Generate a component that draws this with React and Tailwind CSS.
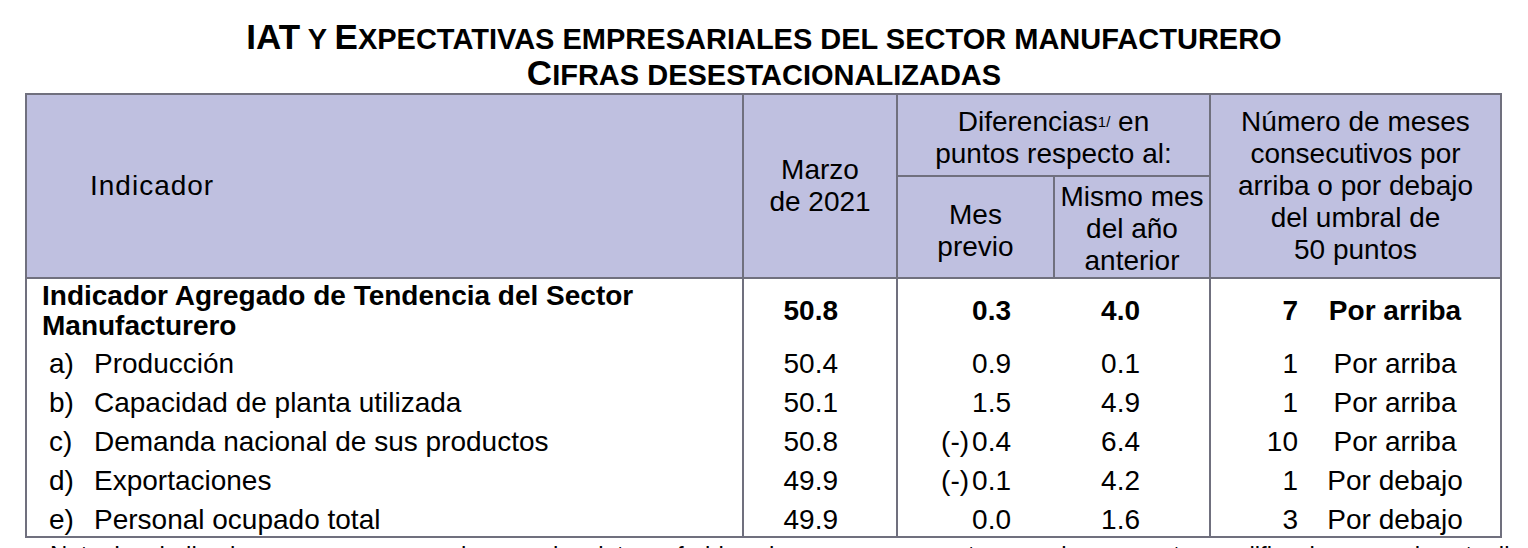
const ROWS = [
  { k: 'a)', name: 'Producción', mar: '50.4', prev: '0.9', anio: '0.1', n: '1', pos: 'Por arriba' },
  { k: 'b)', name: 'Capacidad de planta utilizada', mar: '50.1', prev: '1.5', anio: '4.9', n: '1', pos: 'Por arriba' },
  { k: 'c)', name: 'Demanda nacional de sus productos', mar: '50.8', prev: '0.4', neg: true, anio: '6.4', n: '10', pos: 'Por arriba' },
  { k: 'd)', name: 'Exportaciones', mar: '49.9', prev: '0.1', neg: true, anio: '4.2', n: '1', pos: 'Por debajo' },
  { k: 'e)', name: 'Personal ocupado total', mar: '49.9', prev: '0.0', anio: '1.6', n: '3', pos: 'Por debajo' },
];

function Prev({ v, neg }) {
  return (
    <>
      {neg && <span className="mr-[3px]">(-)</span>}
      {v}
    </>
  );
}

// small caps done by hand: first letters big, the rest uppercase at a smaller size
function Caps({ big, small }) {
  return (
    <>
      <span className="text-[35px] leading-none">{big}</span>
      <span className="text-[29px] leading-none">{small}</span>
    </>
  );
}

export default function App() {
  return (
    <div className="w-[1528px] h-[548px] overflow-hidden bg-white text-black font-['Liberation_Sans',Arial,sans-serif]">
      {/* Title */}
      <div className="pt-[19px] text-center font-bold">
        <p className="h-[36px] leading-[36px] whitespace-nowrap">
          <Caps big="IAT" small=" Y " />
          <Caps big="E" small="XPECTATIVAS EMPRESARIALES DEL SECTOR MANUFACTURERO" />
        </p>
        <p className="h-[36px] leading-[36px] whitespace-nowrap">
          <Caps big="C" small="IFRAS DESESTACIONALIZADAS" />
        </p>
      </div>

      <table className="ml-[25px] mt-[2px] w-[1475px] table-fixed border-collapse border-2 border-[#70707e] text-[28px]">
        <colgroup>
          <col className="w-[717px]" />
          <col className="w-[154px]" />
          <col className="w-[157px]" />
          <col className="w-[156px]" />
          <col className="w-[291px]" />
        </colgroup>
        <thead className="bg-[#bfc0e0] leading-[32px]">
          <tr className="h-[82px]">
            <th rowSpan={2} className="border-2 border-[#70707e] pl-[63px] text-left font-normal tracking-[1px]">
              Indicador
            </th>
            <th rowSpan={2} className="border-2 border-[#70707e] font-normal">
              Marzo
              <br />
              de 2021
            </th>
            <th colSpan={2} className="border-2 border-[#70707e] pt-[6px] font-normal">
              Diferencias<sup className="relative -top-[4px] text-[15px]">1/</sup> en
              <br />
              puntos respecto al:
            </th>
            <th rowSpan={2} className="border-2 border-[#70707e] font-normal">
              Número de meses
              <br />
              consecutivos por
              <br />
              arriba o por debajo
              <br />
              del umbral de
              <br />
              50 puntos
            </th>
          </tr>
          <tr className="h-[99px]">
            <th className="border-2 border-[#70707e] pt-[8px] font-normal">
              Mes
              <br />
              previo
            </th>
            <th className="border-2 border-[#70707e] pt-[4px] font-normal">
              Mismo mes
              <br />
              del año
              <br />
              anterior
            </th>
          </tr>
        </thead>
        <tbody>
          <tr className="h-[62px] font-bold leading-[30px]">
            <td className="border-x-2 border-[#70707e] pl-[15px] pt-[2px]">
              Indicador Agregado de Tendencia del Sector
              <br />
              Manufacturero
            </td>
            <td className="border-r-2 border-[#70707e] pr-[58px] pt-[2px] text-right">50.8</td>
            <td className="pr-[43px] pt-[2px] text-right">0.3</td>
            <td className="border-r-2 border-[#70707e] pr-[69px] pt-[2px] text-right">4.0</td>
            <td className="border-r-2 border-[#70707e] pt-[2px]">
              <div className="flex">
                <span className="w-[87px] text-right">7</span>
                <span className="flex-1 pr-[8px] text-center">Por arriba</span>
              </div>
            </td>
          </tr>
          {ROWS.map((r) => (
            <tr key={r.k} className="h-[39px] leading-[33px]">
              <td className="border-x-2 border-[#70707e] pl-[22px] pt-[6px]">
                <div className="flex">
                  <span className="w-[45px]">{r.k}</span>
                  <span>{r.name}</span>
                </div>
              </td>
              <td className="border-r-2 border-[#70707e] pr-[58px] pt-[6px] text-right">{r.mar}</td>
              <td className="pr-[43px] pt-[6px] text-right">
                <Prev v={r.prev} neg={r.neg} />
              </td>
              <td className="border-r-2 border-[#70707e] pr-[69px] pt-[6px] text-right">{r.anio}</td>
              <td className="border-r-2 border-[#70707e] pt-[6px]">
                <div className="flex">
                  <span className="w-[87px] text-right">{r.n}</span>
                  <span className="flex-1 pr-[8px] text-center">{r.pos}</span>
                </div>
              </td>
            </tr>
          ))}
        </tbody>
      </table>

      <p className="ml-[50px] mt-[5px] whitespace-nowrap text-[24px] leading-[24px]">
        Nota: Los indicadores se generan con base en los datos referidos al mes que se reporta y pueden presentar modificaciones por la actualización del último dato de la serie desestacionalizada.
      </p>
    </div>
  );
}
